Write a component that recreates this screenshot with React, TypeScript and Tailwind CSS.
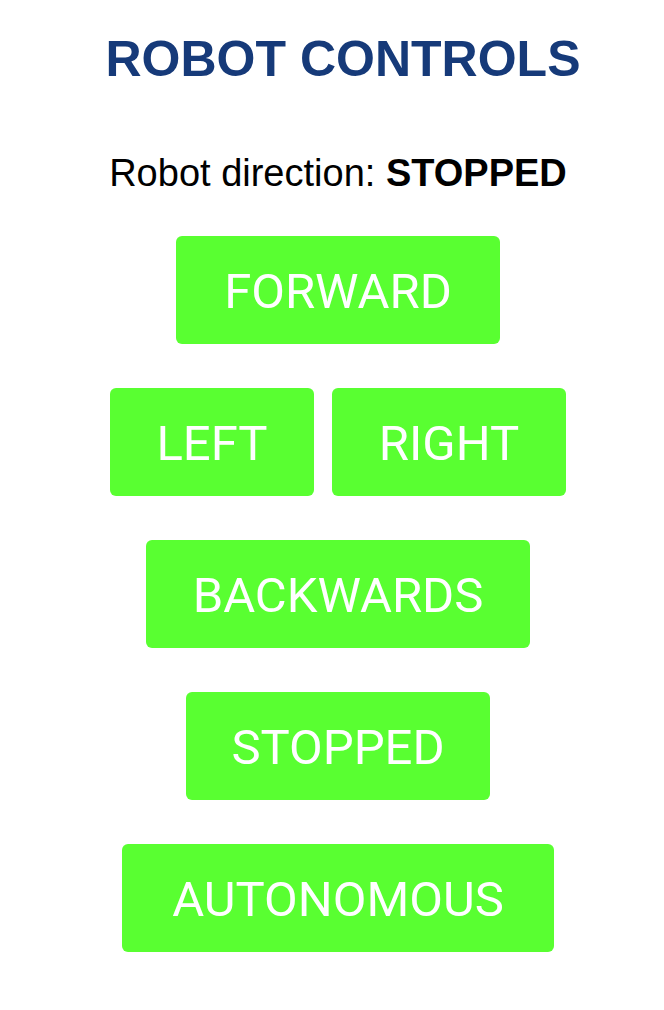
const buttonBase =
  'h-[108px] rounded-[6px] bg-[#59ff31] text-white text-[49px] leading-none flex items-center justify-center pt-[2px]'

const btnFont = { fontFamily: 'Roboto, "Liberation Sans", sans-serif' }

export default function App() {
  return (
    <div className="min-h-screen bg-white flex flex-col items-center pl-[12px] font-['Liberation_Sans',Arial,sans-serif]">
      <h1 className="mt-[34px] pl-[10px] text-[50px] leading-none font-bold text-[#163a79]">ROBOT CONTROLS</h1>

      <p className="mt-[70px] text-[38px] leading-none text-black">
        Robot direction: <span className="font-bold">STOPPED</span>
      </p>

      <div className="mt-[44px] flex flex-col items-center gap-[44px]">
        <button className={`${buttonBase} w-[324px]`} style={btnFont}>
          FORWARD
        </button>
        <div className="flex gap-[18px]">
          <button className={`${buttonBase} w-[204px]`} style={btnFont}>
            LEFT
          </button>
          <button className={`${buttonBase} w-[234px]`} style={btnFont}>
            RIGHT
          </button>
        </div>
        <button className={`${buttonBase} w-[384px]`} style={btnFont}>
          BACKWARDS
        </button>
        <button className={`${buttonBase} w-[304px]`} style={btnFont}>
          STOPPED
        </button>
        <button className={`${buttonBase} w-[432px]`} style={btnFont}>
          AUTONOMOUS
        </button>
      </div>
    </div>
  )
}
